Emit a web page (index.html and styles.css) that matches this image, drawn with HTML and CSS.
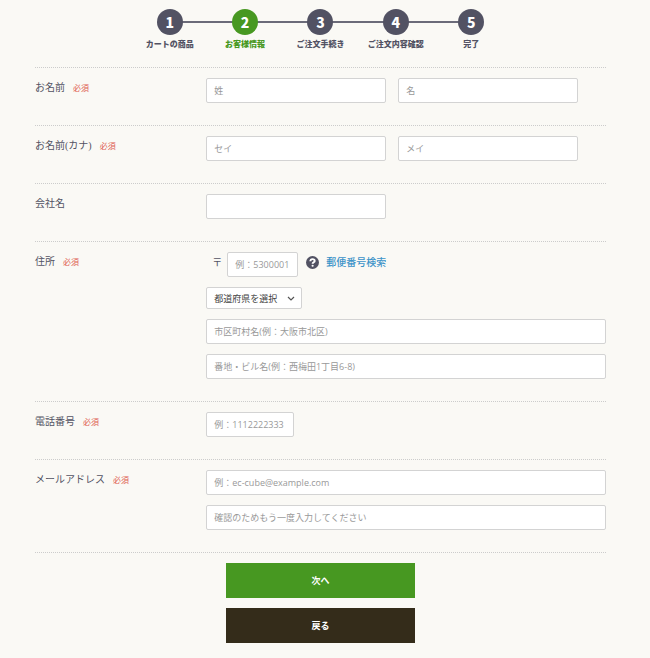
FILE: index.html
```html
<!DOCTYPE html>
<html lang="ja">
<head>
    <meta charset="UTF-8">
    <title>お客様情報</title>
    <link rel="stylesheet" href="styles.css">
</head>
<body>
    <div class="container">
        <ol class="steps">
            <li><span class="number">1</span><span class="step-name">カートの商品</span></li>
            <li class="active"><span class="number">2</span><span class="step-name">お客様情報</span></li>
            <li><span class="number">3</span><span class="step-name">ご注文手続き</span></li>
            <li><span class="number">4</span><span class="step-name">ご注文内容確認</span></li>
            <li><span class="number">5</span><span class="step-name">完了</span></li>
        </ol>

        <form>
            <div class="row">
                <div class="title"><label for="name01">お名前</label><span class="required">必須</span></div>
                <div class="fields pair">
                    <input type="text" id="name01" placeholder="姓">
                    <input type="text" id="name02" placeholder="名" aria-label="名">
                </div>
            </div>

            <div class="row">
                <div class="title"><label for="kana01">お名前(カナ)</label><span class="required">必須</span></div>
                <div class="fields pair">
                    <input type="text" id="kana01" placeholder="セイ">
                    <input type="text" id="kana02" placeholder="メイ" aria-label="メイ">
                </div>
            </div>

            <div class="row">
                <div class="title"><label for="company">会社名</label></div>
                <div class="fields pair">
                    <input type="text" id="company">
                </div>
            </div>

            <div class="row">
                <div class="title"><label for="zip">住所</label><span class="required">必須</span></div>
                <div class="fields">
                    <div class="zip-line">
                        <label for="zip">〒</label>
                        <input type="text" id="zip" class="zip" placeholder="例：5300001">
                        <svg class="help" viewBox="0 0 12 12" aria-hidden="true">
                            <circle cx="6" cy="6" r="6" fill="#525263"/>
                            <path d="M4 4.800C4.100 3.500 4.900 2.900 6 2.900c1.200 0 2 .7 2 1.600C8 5.800 6.100 5.800 6.100 7.200" fill="none" stroke="#fff" stroke-width="1.800"/>
                            <circle cx="6.100" cy="9" r="1" fill="#fff"/>
                        </svg>
                        <a href="#">郵便番号検索</a>
                    </div>
                    <select id="pref" aria-label="都道府県">
                        <option>都道府県を選択</option>
                    </select>
                    <input type="text" id="addr01" placeholder="市区町村名(例：大阪市北区)" aria-label="市区町村名">
                    <input type="text" id="addr02" placeholder="番地・ビル名(例：西梅田1丁目6-8)" aria-label="番地・ビル名">
                </div>
            </div>

            <div class="row">
                <div class="title"><label for="tel">電話番号</label><span class="required">必須</span></div>
                <div class="fields">
                    <input type="tel" id="tel" class="tel" placeholder="例：1112222333">
                </div>
            </div>

            <div class="row">
                <div class="title"><label for="email">メールアドレス</label><span class="required">必須</span></div>
                <div class="fields">
                    <input type="email" id="email" placeholder="例：ec-cube@example.com">
                    <input type="email" id="email2" placeholder="確認のためもう一度入力してください" aria-label="メールアドレス確認">
                </div>
            </div>

            <div class="buttons">
                <button type="submit" class="next">次へ</button>
                <button type="button" class="back">戻る</button>
            </div>
        </form>
    </div>
</body>
</html>
```
FILE: styles.css
```css
* {
    box-sizing: border-box;
}
body {
    margin: 0;
    background-color: #faf9f5;
    color: #525263;
    font-family: "Open Sans", "Noto Sans CJK JP", sans-serif;
    font-size: 10px;
    line-height: 20px;
}
.container {
    padding: 9px 44px 15px 35px;
}

/* order steps */
.steps {
    display: grid;
    grid-template-columns: repeat(5, 1fr);
    width: 66%;
    margin: 0 auto 15px;
    padding: 0;
    list-style: none;
    font-family: "Noto Sans CJK JP", sans-serif;
    font-weight: 900;
    text-align: center;
}
.steps li {
    display: flex;
    flex-direction: column;
    align-items: center;
    background: linear-gradient(#6b6b79, #6b6b79) 0 12px / 100% 2px no-repeat;
}
.steps li:first-child {
    background-position: 100% 12px;
    background-size: 50% 2px;
}
.steps li:last-child {
    background-size: 50% 2px;
}
.number {
    width: 26px;
    height: 26px;
    border-radius: 50%;
    background-color: #525263;
    color: #fff;
    font-size: 14px;
    line-height: 26px;
}
.step-name {
    font-size: 8px;
    line-height: 17px;
    white-space: nowrap;
}
.active .number {
    background-color: #479821;
}
.active .step-name {
    color: #479821;
}

/* form rows */
.row {
    display: grid;
    grid-template-columns: 30% 1fr;
    padding: 10px 0 22px;
    border-top: 1px dotted #ccc;
}
.title {
    font-family: "Liberation Serif", "Noto Sans CJK JP", serif;
}
.required {
    margin-left: 8px;
    color: #de5d50;
    font-size: 8px;
}
.fields {
    display: flex;
    flex-direction: column;
    align-items: flex-start;
    gap: 10px;
}
.pair {
    flex-direction: row;
    gap: 3%;
}
input, select {
    width: 100%;
    height: 25px;
    padding: 0 7px;
    border: 1px solid #d3d3d3;
    border-radius: 2px;
    background-color: #fff;
    color: #525263;
    font-family: inherit;
    font-size: 9px;
}
input::placeholder {
    color: #999;
}
.pair input {
    width: 45%;
}
.zip-line {
    display: flex;
    align-items: flex-start;
    padding-left: 6px;
}
.zip-line a {
    color: #3d93c8;
    font-weight: 500;
    text-decoration: none;
}
.zip-line .zip {
    width: 71px;
    margin: 0 8px 0 5px;
}
.help {
    width: 13px;
    height: 13px;
    margin: 4px 7px 0 0;
}
.tel {
    width: 88px;
}
select {
    appearance: none;
    width: 96px;
    height: 22px;
    color: #444;
    background: #fff url("data:image/svg+xml,%3Csvg xmlns='http://www.w3.org/2000/svg' viewBox='0 0 8 5'%3E%3Cpath d='M1 1l3 3 3-3' fill='none' stroke='%23555' stroke-width='1.2'/%3E%3C/svg%3E") right 6px center / 8px 5px no-repeat;
}

.buttons {
    display: flex;
    flex-direction: column;
    align-items: center;
    gap: 10px;
    padding-top: 10px;
    border-top: 1px dotted #ccc;
}
button {
    width: 33%;
    height: 35px;
    border: none;
    color: #fff;
    font-family: inherit;
    font-size: 9px;
    font-weight: bold;
    cursor: pointer;
}
.next {
    background-color: #479821;
}
.back {
    background-color: #342c1a;
}
```
